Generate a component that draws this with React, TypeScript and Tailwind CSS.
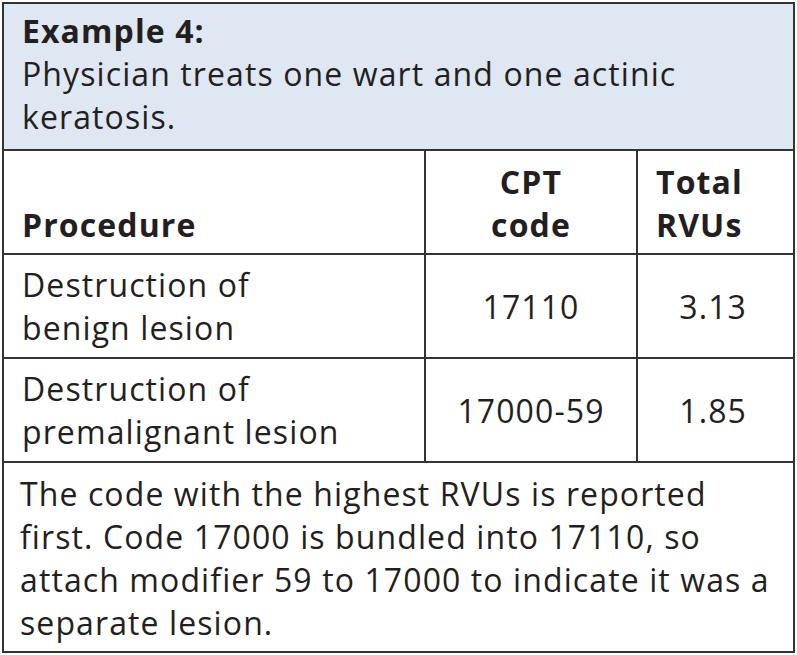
const font = { fontFamily: '"Open Sans", "Noto Sans", sans-serif' };

export default function App() {
  return (
    <div className="bg-white w-[797px] h-[655px] pt-[2px] pl-[2px]" style={font}>
      <div className="w-[793px] h-[651px] border-2 border-[#333] text-[#231f20] text-[32px] leading-[43px] tracking-[1.1px] flex flex-col">
        <div className="h-[147px] bg-[#dfe7f2] border-b-2 border-[#333] px-[18px] pt-[5px]">
          <div className="font-bold">Example 4:</div>
          <div>Physician treats one wart and one actinic keratosis.</div>
        </div>
        <div className="flex h-[104px] border-b-2 border-[#333] font-bold">
          <div className="w-[420px] flex items-end px-[18px] pb-[7px]">Procedure</div>
          <div className="w-[212px] border-l-2 border-[#333] flex flex-col items-center justify-end pb-[7px]">
            <span>CPT</span>
            <span>code</span>
          </div>
          <div className="flex-1 border-l-2 border-[#333] flex flex-col justify-end pl-[18px] pb-[7px]">
            <span>Total</span>
            <span>RVUs</span>
          </div>
        </div>
        <Row proc={["Destruction of", "benign lesion"]} code="17110" rvu="3.13" />
        <Row proc={["Destruction of", "premalignant lesion"]} code="17000-59" rvu="1.85" />
        <div className="flex-1 px-[16px] pt-[9px]">
          The code with the highest RVUs is reported first. Code 17000 is bundled into 17110, so attach modifier 59 to 17000 to indicate it was a separate lesion.
        </div>
      </div>
    </div>
  );
}

function Row({ proc, code, rvu }: { proc: string[]; code: string; rvu: string }) {
  return (
    <div className="flex h-[104px] border-b-2 border-[#333]">
      <div className="w-[420px] flex flex-col justify-center px-[18px]">
        {proc.map((p) => (
          <span key={p}>{p}</span>
        ))}
      </div>
      <div className="w-[212px] border-l-2 border-[#333] flex items-center justify-center">{code}</div>
      <div className="flex-1 border-l-2 border-[#333] flex items-center justify-end pr-[46px]">{rvu}</div>
    </div>
  );
}
